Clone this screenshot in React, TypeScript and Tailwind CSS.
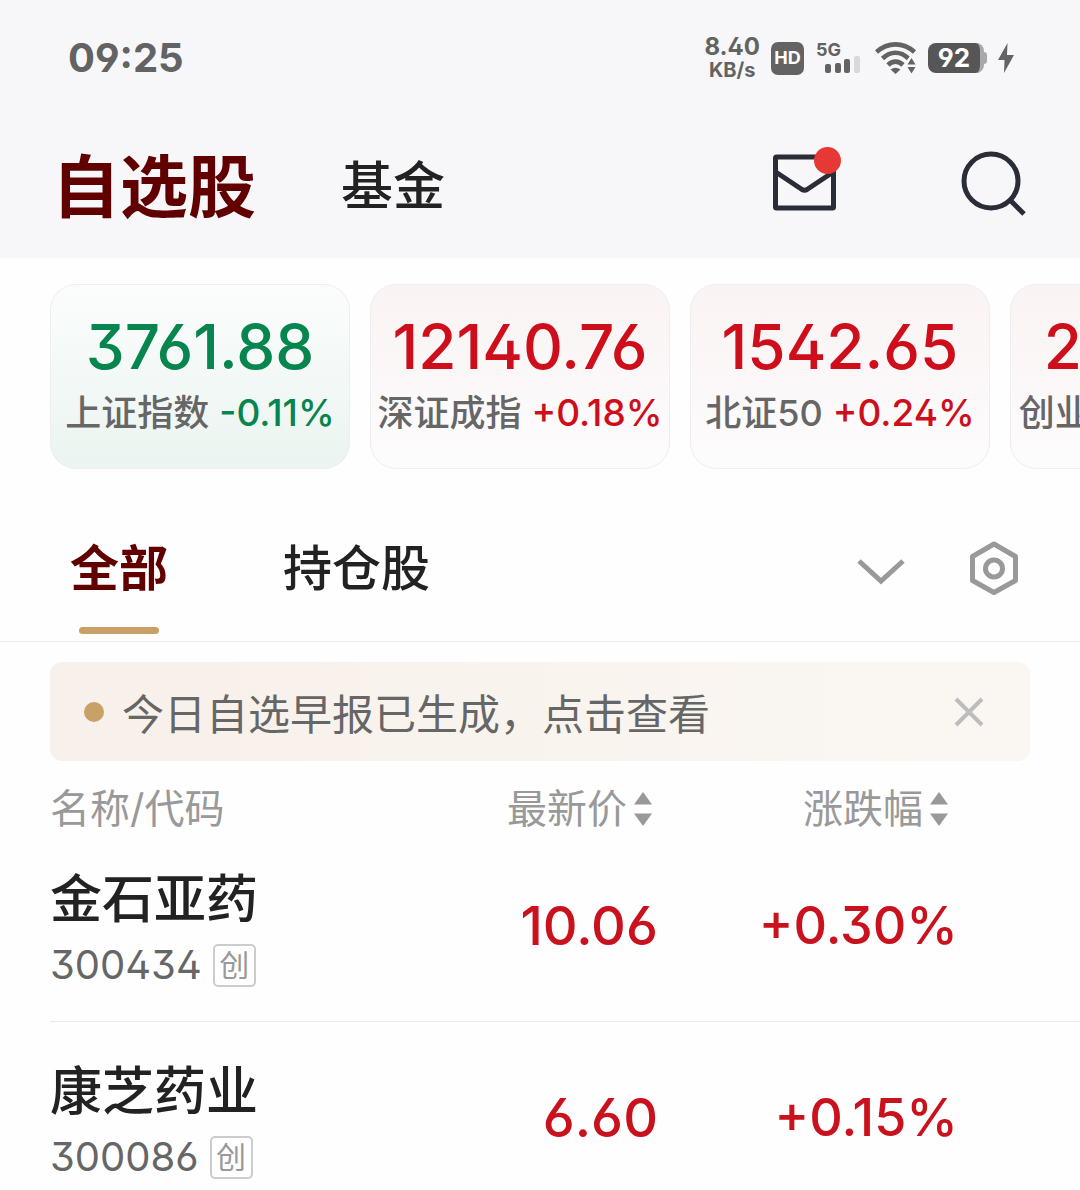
import React from 'react';

interface IndexCard {
  name: string;
  value: string;
  change: string;
}

interface Stock {
  name: string;
  code: string;
  price: string;
  change: string;
}

const indexes: IndexCard[] = [
  { name: '上证指数', value: '3761.88', change: '-0.11%' },
  { name: '深证成指', value: '12140.76', change: '+0.18%' },
  { name: '北证50', value: '1542.65', change: '+0.24%' },
  { name: '创业板指', value: '2571.85', change: '+0.16%' },
];

const stocks: Stock[] = [
  { name: '金石亚药', code: '300434', price: '10.06', change: '+0.30%' },
  { name: '康芝药业', code: '300086', price: '6.60', change: '+0.15%' },
];

const StatusBar: React.FC = () => (
  <div className="flex h-[116px] items-center justify-between pl-[68px] pr-[66px] font-bold text-[#636363]">
    <span className="text-[40px] leading-[48px]">09:25</span>
    <div className="flex items-center">
      <div className="mr-[11px] flex flex-col items-center">
        <span className="text-[24px] leading-[24px]">8.40</span>
        <span className="text-[20px] leading-[22px]">KB/s</span>
      </div>
      <span className="mr-3 flex h-[33px] w-[33px] items-center justify-center rounded-[7px] bg-[#636363] text-[18px] leading-none text-white">
        HD
      </span>
      <div className="relative mr-[14px] h-[34px] w-[45px]">
        <span className="absolute left-0 top-0 text-[18px] leading-[18px]">5G</span>
        <svg className="absolute inset-0" width="45" height="34" viewBox="0 0 45 34">
          <rect x="9" y="23" width="6" height="9" rx="2" fill="#636363" />
          <rect x="19" y="22" width="6" height="10" rx="2" fill="#636363" />
          <rect x="28" y="18" width="6" height="14" rx="2" fill="#636363" />
          <rect x="38" y="15" width="6" height="17" rx="2" fill="#d9d9db" />
        </svg>
      </div>
      {/* Wi-Fi with traffic arrows */}
      <svg className="mr-[11px]" width="42" height="34" viewBox="0 0 42 34">
        <g fill="none" stroke="#636363" strokeWidth="4.6">
          <path d="M1.5 11C13 .8 28 .8 39.5 11" />
          <path d="M7.5 17.5C15.5 9.8 25.5 9.8 33.5 17.5" />
          <path d="M13 24C17.500 19.500 23.500 19.500 28 24" />
        </g>
        <path d="M15.500 28.500Q20.500 25 25.500 28.500L20.500 33z" fill="#636363" />
        <path d="M36.500 15.500L42 23.500H31zM36.500 34L42 26H31z" fill="#f7f7f9" stroke="#f7f7f9" strokeWidth="3" />
        <path d="M36.500 17L40.500 23.500H32.500zM36.500 32.500L40.500 26H32.500z" fill="#636363" />
      </svg>
      <div className="mr-[11px] flex items-center">
        <span className="flex h-[30px] w-[56px] items-center justify-center rounded-[8px] border-r-4 border-[#a9a9ab] bg-[#565656] text-[26px] leading-none text-white">
          92
        </span>
        <span className="h-3 w-[3px] rounded-r-[3px] bg-[#a9a9ab]" />
      </div>
      <svg width="16" height="30" viewBox="0 0 16 30">
        <path d="M9.500 0L0 17H6.500L6 30L16 12H9z" fill="#636363" />
      </svg>
    </div>
  </div>
);

const TopNav: React.FC = () => (
  <nav className="flex h-[142px] items-center pl-[52px] pr-[54px]">
    <button className="text-[68px] font-bold leading-[80px] text-[#600000]">自选股</button>
    <button className="ml-[85px] text-[52px] font-medium leading-[80px] text-[#222]">基金</button>
    <div className="ml-auto flex items-center gap-[124px] pb-2">
      <button aria-label="消息" className="relative">
        <svg width="64" height="58" viewBox="0 0 64 58" fill="none" stroke="#2a2d37" strokeWidth="5" strokeLinejoin="round">
          <rect x="3.500" y="3" width="58" height="51" rx="1" />
          <path d="M4.500 18.500L30 35.500Q32.500 37 35 35.500L60.500 18.500" />
        </svg>
        <span className="absolute -right-[5px] -top-[7px] h-[27px] w-[27px] rounded-full bg-[#e63935]" />
      </button>
      <button aria-label="搜索">
        <svg width="66" height="66" viewBox="0 0 66 66" fill="none" stroke="#2a2d37" strokeWidth="5">
          <circle cx="31" cy="31" r="27" />
          <path d="M50 50L64 64" />
        </svg>
      </button>
    </div>
  </nav>
);

const IndexTile: React.FC<{ card: IndexCard }> = ({ card }) => {
  const down = card.change.startsWith('-');
  return (
    <button
      className={`flex w-[300px] shrink-0 flex-col items-center rounded-[26px] border border-[#eeeef2] bg-gradient-to-b pb-[27px] pt-6 ${
        down ? 'from-[#fbfdfc] to-[#ebf4f0] text-[#07854f]' : 'from-[#faf3f3] to-[#fdfcfd] text-[#ce0e1b]'
      }`}
    >
      <span className="text-[62px] font-medium leading-[76px]">{card.value}</span>
      <span className="flex gap-[10px] whitespace-nowrap text-[36px] font-medium leading-[56px]">
        <span className="text-[#666]">{card.name}</span>
        <span className="text-[37px]">{card.change}</span>
      </span>
    </button>
  );
};

const Tabs: React.FC = () => (
  <div className="flex h-[173px] items-start border-b border-[#ebebeb] pl-[70px] pr-[60px] pt-[68px]">
    <button className="flex flex-col items-center gap-[26px] text-[49px] font-bold leading-[64px] text-[#600000]">
      全部
      <span className="h-[7px] w-20 rounded-full bg-[#c9a067]" />
    </button>
    <button className="ml-[115px] text-[49px] font-medium leading-[64px] text-[#222]">持仓股</button>
    <button aria-label="展开" className="ml-auto mr-[62px] flex h-16 items-center">
      <svg width="50" height="36" viewBox="0 0 50 36" fill="none" stroke="#999" strokeWidth="5">
        <path d="M3 10L25 30L47 10" />
      </svg>
    </button>
    <button aria-label="设置" className="flex h-16 items-center">
      <svg width="52" height="56" viewBox="0 0 52 56" fill="none" stroke="#999" strokeWidth="5">
        <path d="M26 3L47.500 15.500V39.500L26 51.500L4.500 39.500V15.500z" strokeLinejoin="round" />
        <circle cx="26" cy="27.500" r="8.500" />
      </svg>
    </button>
  </div>
);

const Notice: React.FC = () => (
  <div className="mx-[50px] mt-5 flex items-center rounded-xl bg-gradient-to-r from-[#f8f0ea] to-[#faf7f2] py-[18px] pl-[34px] pr-[44px]">
    <span className="h-5 w-5 rounded-full bg-[#c9a067]" />
    <a href="#report" className="ml-[18px] pt-[7px] text-[42px] leading-[56px] text-[#666]">
      今日自选早报已生成，点击查看
    </a>
    <button aria-label="关闭" className="ml-auto">
      <svg width="34" height="34" viewBox="0 0 34 34" fill="none" stroke="#bdbdbd" strokeWidth="4">
        <path d="M4 4L30 30M30 4L4 30" />
      </svg>
    </button>
  </div>
);

const SortHead: React.FC<{ label: string }> = ({ label }) => (
  <button className="inline-flex items-center gap-[7px]">
    {label}
    <svg width="18" height="34" viewBox="0 0 18 34" fill="#999">
      <path d="M9 0L18 12.500H0zM9 34L18 21.500H0z" />
    </svg>
  </button>
);

const StockTable: React.FC = () => (
  <table className="ml-[50px] w-[calc(100%-50px)]">
    <thead>
      <tr className="text-[40px] leading-[42px] text-[#999]">
        <th className="pt-[27px] text-left font-normal">名称/代码</th>
        <th className="w-[250px] pr-[6px] pt-[27px] text-right font-normal">
          <SortHead label="最新价" />
        </th>
        <th className="w-[422px] pr-[132px] pt-[27px] text-right font-normal">
          <SortHead label="涨跌幅" />
        </th>
      </tr>
    </thead>
    <tbody>
      {stocks.map((s) => (
        <tr key={s.code} className="border-b border-[#ebebeb] last:border-b-0">
          <td className="pb-[29px] pt-9">
            <div className="text-[52px] font-medium leading-[68px] text-[#222]">{s.name}</div>
            <div className="mt-1 flex items-center gap-[11px] text-[40px] leading-[54px] text-[#666]">
              {s.code}
              <span className="flex h-[43px] w-[43px] items-center justify-center rounded-[5px] border-2 border-[#ccc] text-[30px] leading-none text-[#999]">
                创
              </span>
            </div>
          </td>
          <td className="text-right text-[54px] font-medium text-[#ca121e]">{s.price}</td>
          <td className="pr-[122px] text-right text-[52px] font-medium text-[#ca121e]">{s.change}</td>
        </tr>
      ))}
    </tbody>
  </table>
);

export default function App() {
  return (
    <main className='min-h-screen overflow-hidden bg-[#fefefe] font-["Inter","Noto_Sans_CJK_SC",sans-serif] [font-feature-settings:"cv09","ss01"]'>
      <header className="bg-[#f7f7f9]">
        <StatusBar />
        <TopNav />
      </header>
      <section className="flex gap-5 overflow-hidden pl-[50px] pt-[26px]">
        {indexes.map((card) => (
          <IndexTile key={card.name} card={card} />
        ))}
      </section>
      <Tabs />
      <Notice />
      <StockTable />
    </main>
  );
}
